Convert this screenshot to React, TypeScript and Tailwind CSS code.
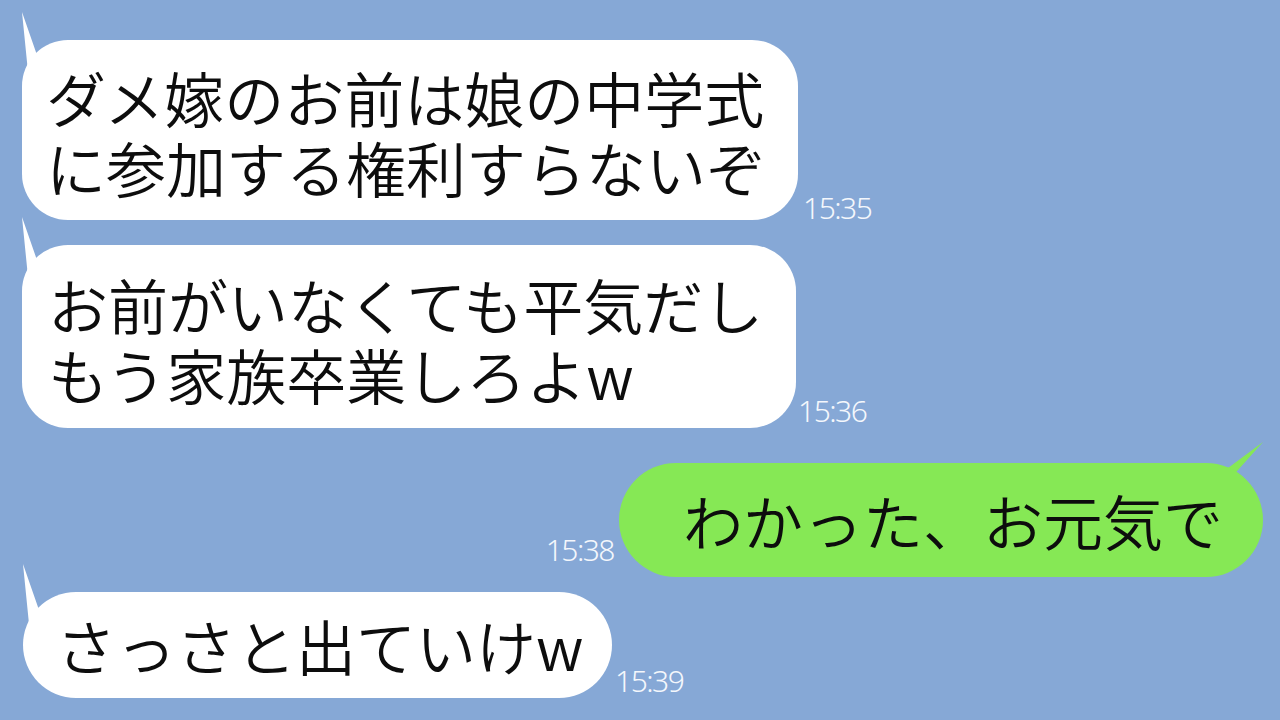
import React from 'react';

type Side = 'left' | 'right';

function Tail({ side, color }: { side: Side; color: string }) {
  if (side === 'left') {
    return (
      <svg
        className="absolute left-[-4px] top-[-28px]"
        width="50"
        height="64"
        viewBox="0 0 50 64"
      >
        <polygon points="4,0 20,46 42,32 46,60 10,60" fill={color} />
      </svg>
    );
  }
  return (
    <svg
      className="absolute right-0 top-[-21px]"
      width="50"
      height="56"
      viewBox="0 0 50 56"
    >
      <polygon points="50,0 15,26 32,38 30,56 0,56" fill={color} />
    </svg>
  );
}

function Bubble({
  lines,
  side = 'left',
  className,
}: {
  lines: string[];
  side?: Side;
  className: string;
}) {
  const color = side === 'left' ? '#ffffff' : '#86e855';
  return (
    <div className="relative shrink-0">
      <Tail side={side} color={color} />
      <div
        className={`relative whitespace-nowrap text-[60px] font-[350] leading-[70px] text-[#0d0d0d] ${
          side === 'left' ? 'bg-white' : 'bg-[#86e855]'
        } ${className}`}
      >
        {lines.map((l) => (
          <div key={l}>{l}</div>
        ))}
      </div>
    </div>
  );
}

function Time({ t, className }: { t: string; className: string }) {
  return (
    <span
      className={`shrink-0 text-[30px] font-light leading-none tracking-[-1.5px] text-[#f4f7fc] ${className}`}
      style={{ fontFamily: '"Noto Sans", sans-serif' }}
    >
      {t}
    </span>
  );
}

export default function App() {
  return (
    <div
      className="h-[720px] w-[1280px] overflow-hidden bg-[#86a8d6] flex flex-col"
      style={{ fontFamily: '"Noto Sans CJK JP", "Noto Sans", sans-serif' }}
    >
      <div className="mt-[40px] ml-[22px] flex items-end">
        <Bubble
          lines={['ダメ嫁のお前は娘の中学式', 'に参加する権利すらないぞ']}
          className="w-[776px] rounded-[46px] pl-[24px] pt-[22px] pb-[18px]"
        />
        <Time t="15:35" className="ml-[5px] mb-[-3px]" />
      </div>

      <div className="mt-[25px] ml-[22px] flex items-end">
        <Bubble
          lines={['お前がいなくても平気だし', 'もう家族卒業しろよw']}
          className="w-[774px] rounded-[46px] pl-[26px] pt-[24px] pb-[19px]"
        />
        <Time t="15:36" className="ml-[2px] mb-[2px]" />
      </div>

      <div className="mt-[35px] mr-[17px] flex items-end justify-end">
        <Time t="15:38" className="mr-[5px] mb-[12px]" />
        <Bubble
          side="right"
          lines={['わかった、お元気で']}
          className="w-[644px] rounded-[57px] pl-[64px] pt-[22px] pb-[22px]"
        />
      </div>

      <div className="mt-[15px] ml-[23px] flex items-end">
        <Bubble
          lines={['さっさと出ていけw']}
          className="w-[589px] rounded-[53px] pl-[33px] pt-[18px] pb-[18px]"
        />
        <Time t="15:39" className="ml-[3px] mb-[2px]" />
      </div>
    </div>
  );
}
